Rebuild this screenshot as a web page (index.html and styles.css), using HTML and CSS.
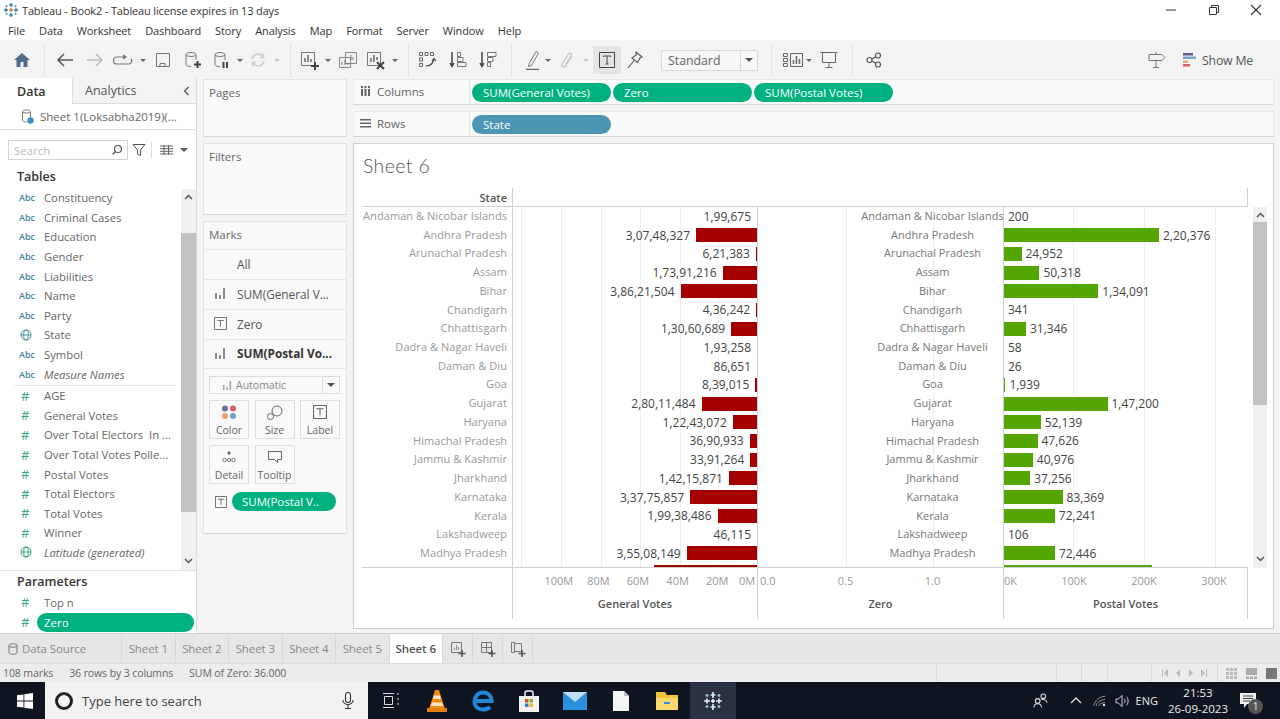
FILE: index.html
```html
<!DOCTYPE html>
<html lang="en">
  <head>
    <meta charset="UTF-8" />
    <title>Tableau - Book2</title>
    <link rel="stylesheet" href="styles.css">
  </head>
  <body>
    <header class="titlebar">
      <svg class="logo" width="16" height="16" viewBox="0 0 16 16"><g stroke="#2f7fb0" stroke-width="1.4"><path d="M8 1v4M6.2 3h3.6M8 11v4M6.2 13h3.6M1 8h4M3 6.2v3.6M11 8h4M13 6.2v3.6"/></g><g stroke="#7a9cc0" stroke-width="1.2"><path d="M3.5 3v2.4M2.4 4.200h2.200M12.500 3v2.400M11.400 4.200h2.200M3.500 10.600V13M2.400 11.800h2.200M12.500 10.600V13M11.400 11.800h2.200"/></g><path d="M8 6v4M6 8h4" stroke="#e0803a" stroke-width="1.400"/></svg>
      <span class="app-title">Tableau - Book2 - Tableau license expires in 13 days</span>
      <div class="winctl">
        <svg width="12" height="12" viewBox="0 0 12 12"><path d="M1 6h10" stroke="#555" stroke-width="1.200"/></svg>
        <svg width="12" height="12" viewBox="0 0 12 12" fill="none" stroke="#333"><path d="M1.500 3.500h7v7h-7zM3.500 3.500v-2h7v7h-2"/></svg>
        <svg width="12" height="12" viewBox="0 0 12 12"><path d="M1 1l10 10M11 1L1 11" stroke="#333" stroke-width="1.100"/></svg>
      </div>
    </header>

    <nav class="menubar">
      <span>File</span><span>Data</span><span>Worksheet</span><span>Dashboard</span><span>Story</span><span>Analysis</span><span>Map</span><span>Format</span><span>Server</span><span>Window</span><span>Help</span>
    </nav>

    <div class="toolbar">
      <div class="tgroup g-home">
        <div class="tb w30"><svg width="18" height="16" viewBox="0 0 18 16"><path d="M9 1L1 8h2.500v7h4v-5h3v5h4V8H17z" fill="#4f6d88"/></svg></div>
      </div>
      <div class="tgroup g-nav">
        <div class="tb w30"><svg width="18" height="14" viewBox="0 0 18 14" fill="none" stroke="#555" stroke-width="1.500"><path d="M17 7H2M8 1L2 7l6 6"/></svg></div>
        <div class="tb w30"><svg width="18" height="14" viewBox="0 0 18 14" fill="none" stroke="#bbb" stroke-width="1.500"><path d="M1 7h15M10 1l6 6-6 6"/></svg></div>
        <div class="tb w26"><svg width="20" height="12" viewBox="0 0 20 12" fill="none" stroke="#777" stroke-width="1.200"><path d="M12 3H4a3 3 0 0 0 0 7h12a3 3 0 0 0 2-5"/><path d="M10 1l3 2-3 2" fill="#777"/></svg></div>
        <div class="tb w14"><i class="caret"></i></div>
        <div class="tb w26"><svg width="16" height="16" viewBox="0 0 16 16" fill="none" stroke="#777"><path d="M1.500 1.500h13v13h-13zM5 14.500v-3h5v3"/></svg></div>
        <div class="tb w34"><svg width="18" height="18" viewBox="0 0 18 18" fill="none" stroke="#777"><ellipse cx="7" cy="3.500" rx="5" ry="2"/><path d="M2 3.500v10c0 1 2 2 5 2M12 3.500V9"/><path d="M13.500 10v7M10 13.500h7" stroke="#444" stroke-width="2"/></svg></div>
        <div class="tb w24"><svg width="18" height="18" viewBox="0 0 18 18" fill="none" stroke="#777"><ellipse cx="7" cy="3.500" rx="5" ry="2"/><path d="M2 3.500v10c0 1 2 2 5 2M12 3.500V9"/><path d="M10.500 11v6M14 11v6" stroke="#444" stroke-width="2"/></svg></div>
        <div class="tb w12"><i class="caret"></i></div>
        <div class="tb w24"><svg width="16" height="16" viewBox="0 0 16 16" fill="none" stroke="#ccc" stroke-width="1.500"><path d="M2 7a6 6 0 0 1 11-2M14 9a6 6 0 0 1-11 2"/><path d="M13.500 1.500V5.500H10M2.500 14.500V10.500H6"/></svg></div>
        <div class="tb w14"><i class="caret off"></i></div>
      </div>
      <div class="tgroup g-sheet">
        <div class="tb w28"><svg width="20" height="20" viewBox="0 0 20 20" fill="none" stroke="#777"><path d="M1.500 2.500h13v13h-13z"/><path d="M5 12V8M8 12V5M11 12V9" stroke="#555" stroke-width="1.300"/><path d="M15 12v8M11 16h8" stroke="#444" stroke-width="2"/></svg></div>
        <div class="tb w8"><i class="caret"></i></div>
        <div class="tb w32"><svg width="20" height="18" viewBox="0 0 20 18" fill="none" stroke="#888"><path d="M7.500 1.500h11v11h-11zM1.500 6.500h11v10h-11z" fill="#f3f3f3"/><path d="M4 14v-3M7 14v-5M10 14v-2M13 9V4M15 9V6" stroke="#777"/></svg></div>
        <div class="tb w24"><svg width="20" height="20" viewBox="0 0 20 20" fill="none" stroke="#777"><path d="M1.500 2.500h13v13h-13z"/><path d="M5 12V8M8 12V5M11 10V7" stroke="#555" stroke-width="1.300"/><path d="M11 12l7 7M18 12l-7 7" stroke="#444" stroke-width="2"/></svg></div>
        <div class="tb w14"><i class="caret"></i></div>
      </div>
      <div class="tgroup g-sort">
        <div class="tb w28"><svg width="20" height="18" viewBox="0 0 20 18" fill="none" stroke="#666"><path d="M1.500 1.500h3v3h-3zM7 1.500h3v3H7zM12.500 1.500h3v3h-3zM1.500 7h3v3h-3zM1.500 12.500h3v3h-3z"/><path d="M8 15c4 0 7-3 8-7M14 10l2-2.500 2 2.500" stroke="#444" stroke-width="1.200"/></svg></div>
        <div class="tb w32"><svg width="18" height="18" viewBox="0 0 18 18" fill="none" stroke="#777"><path d="M3 1v14M1 12l2 3.500L5 12" stroke="#444" stroke-width="1.500"/><path d="M8.500 1.500h3v4h-3zM8.500 6.500h5.500v4H8.500zM8.500 11.500h8.500v4H8.500z"/></svg></div>
        <div class="tb w28"><svg width="18" height="18" viewBox="0 0 18 18" fill="none" stroke="#777"><path d="M3 1v14M1 12l2 3.500L5 12" stroke="#444" stroke-width="1.500"/><path d="M8.500 1.500h8.500v4H8.500zM8.500 6.500h5.500v4H8.500zM8.500 11.500h3v4h-3z"/></svg></div>
      </div>
      <div class="tgroup g-format">
        <div class="tb w20"><svg width="14" height="20" viewBox="0 0 14 20" fill="none" stroke="#777"><path d="M3 14L10 1.500l2.500 1.500L5.500 15.500l-3 1z"/><path d="M0 19.500h13" stroke="#666" stroke-width="1.500"/></svg></div>
        <div class="tb w10"><i class="caret"></i></div>
        <div class="tb w28"><svg width="14" height="18" viewBox="0 0 14 18" fill="none" stroke="#c4c4c4" stroke-width="1.300"><path d="M12 5L5.500 15c-1.500 2-4.500 .5-3.500-1.500L8.500 3c1-1.500 3.500-.5 3 1.500L6 13"/></svg></div>
        <div class="tb w10"><i class="caret off"></i></div>
        <div class="tb t-active"><svg width="16" height="16" viewBox="0 0 16 16" fill="none" stroke="#444"><path d="M.5.500h15v15H.5z"/><path d="M4.500 5V4h7v1M8 4v8M6.500 12h3"/></svg></div>
        <div class="tb w28"><svg width="16" height="18" viewBox="0 0 16 18" fill="none" stroke="#555" stroke-width="1.100"><path d="M9 1l6 5-2 1-2.500 4.500L5 7l4-3zM7.500 9L1 17"/></svg></div>
        <div class="fit-select"><span>Standard</span><b><i class="caret dark"></i></b></div>
      </div>
      <div class="tgroup g-show">
        <div class="tb w24"><svg width="20" height="16" viewBox="0 0 20 16" fill="none" stroke="#666"><path d="M.5 1.500h4v3h-4zM.5 6.500h4v3h-4zM.5 11.500h4v3h-4zM7.500 1.500h12v13h-12z"/><path d="M10.500 12V8M13.500 12V4M16.500 12V7" stroke-width="1.500"/></svg></div>
        <div class="tb w8"><i class="caret"></i></div>
        <div class="tb w28 m2"><svg width="18" height="18" viewBox="0 0 18 18" fill="none" stroke="#666"><path d="M.5 1.500h17M2.500 1.500v10h13v-10M9 11.500v5M5.500 16.500h7"/></svg></div>
      </div>
      <div class="tgroup g-share">
        <div class="tb w28"><svg width="16" height="16" viewBox="0 0 16 16" fill="none" stroke="#555" stroke-width="1.200"><circle cx="3.500" cy="8" r="2.500"/><circle cx="12" cy="3.500" r="2.500"/><circle cx="12" cy="12.500" r="2.500"/><path d="M5.800 7l4-2.300M5.800 9l4 2.300"/></svg></div>
      </div>
      <div class="toolbar-right">
        <svg width="18" height="18" viewBox="0 0 18 18" fill="none" stroke="#777"><path d="M1 3.500h13l3 3-3 3H1zM8 1v2.500M8 9.500v7M5 16.500h6"/></svg>
        <div class="show-me">
          <svg width="14" height="14" viewBox="0 0 14 14"><path d="M0 0h10v2.500H0z" fill="#6b5b8e"/><path d="M0 3.500h13V6H0z" fill="#7f9fc8"/><path d="M0 7.500h5V10H0z" fill="#e8a87c"/><path d="M0 11h7v2.500H0z" fill="#e0616a"/></svg>
          <span>Show Me</span>
        </div>
      </div>
    </div>

    <div class="workspace">
      <aside class="data-pane">
        <div class="pane-tabs">
          <div class="pane-tab on">Data</div>
          <div class="pane-tab">Analytics<svg width="7" height="10" viewBox="0 0 7 10" fill="none" stroke="#555" stroke-width="1.200"><path d="M5.500 1L1.500 5l4 4"/></svg></div>
        </div>
        <div class="source">
          <svg width="13" height="15" viewBox="0 0 13 15" fill="none" stroke="#777"><ellipse cx="5.500" cy="2.500" rx="4" ry="1.600"/><path d="M1.500 2.500v9c0 1 1.800 1.500 4 1.500M9.500 2.500V8"/><circle cx="9.500" cy="11.500" r="3.200" fill="#3f8fc4" stroke="none"/></svg>
          <span>Sheet 1(Loksabha2019)(...</span>
        </div>
        <div class="search-row">
          <div class="search-box">
            <span>Search</span>
            <svg width="12" height="12" viewBox="0 0 12 12" fill="none" stroke="#555" stroke-width="1.200"><circle cx="7" cy="5" r="3.500"/><path d="M4.500 7.500L1.500 10.500"/></svg>
          </div>
          <svg class="funnel" width="14" height="14" viewBox="0 0 14 14" fill="none" stroke="#555"><path d="M1 1.500h12L8.500 7v5.500l-3-1.500V7z"/></svg>
          <i class="vline"></i>
          <svg width="13" height="10" viewBox="0 0 13 10" fill="none" stroke="#666"><path d="M0 1h13M0 3.700h13M0 6.300h13M0 9h13M4 0v10M8.500 0v10"/></svg>
          <i class="caret dark"></i>
        </div>
        <h2 class="pane-head">Tables</h2>
        <div class="field-scroll">
          <ul class="fields">
            <li><b class="abc">Abc</b>Constituency</li>
            <li><b class="abc">Abc</b>Criminal Cases</li>
            <li><b class="abc">Abc</b>Education</li>
            <li><b class="abc">Abc</b>Gender</li>
            <li><b class="abc">Abc</b>Liabilities</li>
            <li><b class="abc">Abc</b>Name</li>
            <li><b class="abc">Abc</b>Party</li>
            <li><b class="type"><svg width="12" height="12" viewBox="0 0 12 12" fill="none" stroke="#4e8fa8"><circle cx="6" cy="6" r="5"/><ellipse cx="6" cy="6" rx="2.300" ry="5"/><path d="M1 6h10"/></svg></b>State</li>
            <li><b class="abc">Abc</b>Symbol</li>
            <li class="gen"><b class="abc">Abc</b>Measure Names</li>
            <li class="divider"></li>
            <li><b class="num">#</b>AGE</li>
            <li><b class="num">#</b>General Votes</li>
            <li><b class="num">#</b>Over Total Electors&nbsp; In ...</li>
            <li><b class="num">#</b>Over Total Votes Polle...</li>
            <li><b class="num">#</b>Postal Votes</li>
            <li><b class="num">#</b>Total Electors</li>
            <li><b class="num">#</b>Total Votes</li>
            <li><b class="num">#</b>Winner</li>
            <li class="gen"><b class="type"><svg width="12" height="12" viewBox="0 0 12 12" fill="none" stroke="#3fa583"><circle cx="6" cy="6" r="5"/><ellipse cx="6" cy="6" rx="2.300" ry="5"/><path d="M1 6h10"/></svg></b>Latitude (generated)</li>
          </ul>
          <div class="scrollbar field-sb">
            <svg class="chev" width="9" height="6" viewBox="0 0 9 6" fill="none" stroke="#555" stroke-width="1.500"><path d="M1 5l3.500-3.500L8 5"/></svg>
            <div class="thumb"></div>
            <svg class="chev end" width="9" height="6" viewBox="0 0 9 6" fill="none" stroke="#555" stroke-width="1.500"><path d="M1 1l3.500 3.500L8 1"/></svg>
          </div>
        </div>
        <div class="params">
          <h2 class="pane-head">Parameters</h2>
          <ul class="fields">
            <li><b class="num">#</b>Top n</li>
            <li class="param-on"><b class="num">#</b><span class="pill">Zero</span></li>
          </ul>
        </div>
      </aside>

      <section class="cards">
        <div class="card card-pages"><h3>Pages</h3></div>
        <div class="card card-filters"><h3>Filters</h3></div>
        <div class="card card-marks">
          <h3>Marks</h3>
          <div class="mark-row all"><span>All</span></div>
          <div class="mark-row"><svg class="barsico" width="12" height="11" viewBox="0 0 12 11"><path d="M1 5h2v6H1zM5 7h2v4H5zM9 0h2v11H9z" fill="#8a8a8a"/></svg><span>SUM(General V...</span></div>
          <div class="mark-row"><svg class="tico" width="13" height="13" viewBox="0 0 13 13" fill="none" stroke="#777"><path d="M.5.500h12v12H.5zM3.500 4V3.500h6V4M6.500 3.500v6"/></svg><span>Zero</span></div>
          <div class="mark-row strong"><svg class="barsico" width="12" height="11" viewBox="0 0 12 11"><path d="M1 5h2v6H1zM5 7h2v4H5zM9 0h2v11H9z" fill="#8a8a8a"/></svg><span>SUM(Postal Vo...</span></div>
          <div class="mark-type">
            <svg width="10" height="9" viewBox="0 0 12 11"><path d="M1 5h2v6H1zM5 7h2v4H5zM9 0h2v11H9z" fill="#aaa"/></svg>
            <span>Automatic</span>
            <b><i class="caret dark"></i></b>
          </div>
          <div class="mark-btns">
            <div class="mbtn"><svg width="16" height="15" viewBox="0 0 16 15"><circle cx="4" cy="3.500" r="3" fill="#7a6aa0"/><circle cx="12" cy="3.500" r="3" fill="#d9606a"/><circle cx="4" cy="11" r="3" fill="#e8a070"/><circle cx="12" cy="11" r="3" fill="#6f9fd0"/></svg><span>Color</span></div>
            <div class="mbtn"><svg width="16" height="15" viewBox="0 0 16 15" fill="none" stroke="#666"><circle cx="10" cy="6" r="5"/><circle cx="3.500" cy="11.500" r="3" fill="#f9f9f9"/></svg><span>Size</span></div>
            <div class="mbtn"><svg width="14" height="14" viewBox="0 0 13 13" fill="none" stroke="#666"><path d="M.5.500h12v12H.5zM3.500 4V3.500h6V4M6.500 3.500v6"/></svg><span>Label</span></div>
            <div class="mbtn"><svg width="14" height="14" viewBox="0 0 14 14" fill="none" stroke="#777"><circle cx="7" cy="3" r="1.500" fill="#555" stroke="none"/><circle cx="2.500" cy="10" r="1.700"/><circle cx="7" cy="10" r="1.700"/><circle cx="11.500" cy="10" r="1.700"/></svg><span>Detail</span></div>
            <div class="mbtn"><svg width="14" height="14" viewBox="0 0 14 14" fill="none" stroke="#666"><path d="M.5 1.500h13v8H9.500v3l-3-3h-6z"/></svg><span>Tooltip</span></div>
          </div>
          <div class="mark-pill">
            <svg width="12" height="12" viewBox="0 0 13 13" fill="none" stroke="#666"><path d="M.5.500h12v12H.5zM3.500 4V3.500h6V4M6.500 3.500v6"/></svg>
            <span class="pill">SUM(Postal V..</span>
          </div>
        </div>
      </section>

      <section class="work">
        <div class="shelf">
          <div class="shelf-label"><svg width="11" height="10" viewBox="-1 0 11 10"><path d="M0 3h2v7H0zM3.500 3h2v7h-2zM7 3h2v7H7zM0 0h2v2H0zM3.500 0h2v2h-2zM7 0h2v2H7z" fill="#666"/></svg><span>Columns</span></div>
          <span class="pill shelf-pill">SUM(General Votes)</span>
          <span class="pill shelf-pill">Zero</span>
          <span class="pill shelf-pill">SUM(Postal Votes)</span>
        </div>
        <div class="shelf">
          <div class="shelf-label"><svg width="11" height="9" viewBox="0 0 11 9"><path d="M0 0h11v1.500H0zM0 3.500h11V5H0zM0 7h11v1.500H0z" fill="#666"/></svg><span>Rows</span></div>
          <span class="pill shelf-pill dim">State</span>
        </div>

        <div class="sheet">
          <h1 class="sheet-title">Sheet 6</h1>
          <div class="viz">
            <div class="viz-head">
              <div class="head-state">State</div>
              <div class="head-rest"></div>
            </div>
            <div class="viz-mid">
              <div class="rows">
                <div class="row"><div class="c-state">Andaman &amp; Nicobar Islands</div><div class="c-gen"><span>1,99,675</span><i style="width:0"></i></div><div class="c-zero"><span>Andaman &amp; Nicobar Islands</span></div><div class="c-post"><i style="width:0"></i><span>200</span></div></div>
                <div class="row"><div class="c-state">Andhra Pradesh</div><div class="c-gen"><span>3,07,48,327</span><i style="width:61px"></i></div><div class="c-zero"><span>Andhra Pradesh</span></div><div class="c-post"><i style="width:155px"></i><span>2,20,376</span></div></div>
                <div class="row"><div class="c-state">Arunachal Pradesh</div><div class="c-gen"><span>6,21,383</span><i style="width:1.2px"></i></div><div class="c-zero"><span>Arunachal Pradesh</span></div><div class="c-post"><i style="width:17.5px"></i><span>24,952</span></div></div>
                <div class="row"><div class="c-state">Assam</div><div class="c-gen"><span>1,73,91,216</span><i style="width:34.4px"></i></div><div class="c-zero"><span>Assam</span></div><div class="c-post"><i style="width:35.4px"></i><span>50,318</span></div></div>
                <div class="row"><div class="c-state">Bihar</div><div class="c-gen"><span>3,86,21,504</span><i style="width:76.5px"></i></div><div class="c-zero"><span>Bihar</span></div><div class="c-post"><i style="width:94.3px"></i><span>1,34,091</span></div></div>
                <div class="row"><div class="c-state">Chandigarh</div><div class="c-gen"><span>4,36,242</span><i style="width:0.9px"></i></div><div class="c-zero"><span>Chandigarh</span></div><div class="c-post"><i style="width:0"></i><span>341</span></div></div>
                <div class="row"><div class="c-state">Chhattisgarh</div><div class="c-gen"><span>1,30,60,689</span><i style="width:25.9px"></i></div><div class="c-zero"><span>Chhattisgarh</span></div><div class="c-post"><i style="width:22px"></i><span>31,346</span></div></div>
                <div class="row"><div class="c-state">Dadra &amp; Nagar Haveli</div><div class="c-gen"><span>1,93,258</span><i style="width:0"></i></div><div class="c-zero"><span>Dadra &amp; Nagar Haveli</span></div><div class="c-post"><i style="width:0"></i><span>58</span></div></div>
                <div class="row"><div class="c-state">Daman &amp; Diu</div><div class="c-gen"><span>86,651</span><i style="width:0"></i></div><div class="c-zero"><span>Daman &amp; Diu</span></div><div class="c-post"><i style="width:0"></i><span>26</span></div></div>
                <div class="row"><div class="c-state">Goa</div><div class="c-gen"><span>8,39,015</span><i style="width:1.7px"></i></div><div class="c-zero"><span>Goa</span></div><div class="c-post"><i style="width:1.4px"></i><span>1,939</span></div></div>
                <div class="row"><div class="c-state">Gujarat</div><div class="c-gen"><span>2,80,11,484</span><i style="width:55.5px"></i></div><div class="c-zero"><span>Gujarat</span></div><div class="c-post"><i style="width:103.5px"></i><span>1,47,200</span></div></div>
                <div class="row"><div class="c-state">Haryana</div><div class="c-gen"><span>1,22,43,072</span><i style="width:24.2px"></i></div><div class="c-zero"><span>Haryana</span></div><div class="c-post"><i style="width:36.7px"></i><span>52,139</span></div></div>
                <div class="row"><div class="c-state">Himachal Pradesh</div><div class="c-gen"><span>36,90,933</span><i style="width:7.3px"></i></div><div class="c-zero"><span>Himachal Pradesh</span></div><div class="c-post"><i style="width:33.5px"></i><span>47,626</span></div></div>
                <div class="row"><div class="c-state">Jammu &amp; Kashmir</div><div class="c-gen"><span>33,91,264</span><i style="width:6.7px"></i></div><div class="c-zero"><span>Jammu &amp; Kashmir</span></div><div class="c-post"><i style="width:28.8px"></i><span>40,976</span></div></div>
                <div class="row"><div class="c-state">Jharkhand</div><div class="c-gen"><span>1,42,15,871</span><i style="width:28.1px"></i></div><div class="c-zero"><span>Jharkhand</span></div><div class="c-post"><i style="width:26.2px"></i><span>37,256</span></div></div>
                <div class="row"><div class="c-state">Karnataka</div><div class="c-gen"><span>3,37,75,857</span><i style="width:66.9px"></i></div><div class="c-zero"><span>Karnataka</span></div><div class="c-post"><i style="width:58.6px"></i><span>83,369</span></div></div>
                <div class="row"><div class="c-state">Kerala</div><div class="c-gen"><span>1,99,38,486</span><i style="width:39.5px"></i></div><div class="c-zero"><span>Kerala</span></div><div class="c-post"><i style="width:50.8px"></i><span>72,241</span></div></div>
                <div class="row"><div class="c-state">Lakshadweep</div><div class="c-gen"><span>46,115</span><i style="width:0"></i></div><div class="c-zero"><span>Lakshadweep</span></div><div class="c-post"><i style="width:0"></i><span>106</span></div></div>
                <div class="row"><div class="c-state">Madhya Pradesh</div><div class="c-gen"><span>3,55,08,149</span><i style="width:70.3px"></i></div><div class="c-zero"><span>Madhya Pradesh</span></div><div class="c-post"><i style="width:50.9px"></i><span>72,446</span></div></div>
                <div class="row"><div class="c-state">Maharashtra</div><div class="c-gen"><span></span><i style="width:103px"></i></div><div class="c-zero"><span>Maharashtra</span></div><div class="c-post"><i style="width:148px"></i><span></span></div></div>
              </div>
              <div class="scrollbar viz-sb">
                <svg class="chev" width="9" height="6" viewBox="0 0 9 6" fill="none" stroke="#555" stroke-width="1.500"><path d="M1 5l3.500-3.500L8 5"/></svg>
                <div class="thumb"></div>
                <svg class="chev end" width="9" height="6" viewBox="0 0 9 6" fill="none" stroke="#555" stroke-width="1.500"><path d="M1 1l3.500 3.500L8 1"/></svg>
              </div>
            </div>
            <div class="viz-axis">
              <div class="ax-blank"></div>
              <div class="ax ax-gen">
                <div class="ticks"><span>100M</span><span>80M</span><span>60M</span><span>40M</span><span>20M</span><span class="last">0M</span></div>
                <div class="ax-title">General Votes</div>
              </div>
              <div class="ax ax-zero">
                <div class="ticks"><span class="first">0.0</span><span>0.5</span><span>1.0</span></div>
                <div class="ax-title">Zero</div>
              </div>
              <div class="ax ax-post">
                <div class="ticks"><span class="first">0K</span><span>100K</span><span>200K</span><span>300K</span></div>
                <div class="ax-title">Postal Votes</div>
              </div>
            </div>
          </div>
        </div>
      </section>
    </div>

    <div class="tabbar">
      <div class="tab tab-source"><svg width="10" height="12" viewBox="0 0 10 12" fill="none" stroke="#777"><ellipse cx="5" cy="2.500" rx="4" ry="1.800"/><path d="M1 2.500v7c0 1 1.800 1.800 4 1.800s4-.8 4-1.800v-7"/></svg>Data Source</div>
      <div class="tab">Sheet 1</div>
      <div class="tab">Sheet 2</div>
      <div class="tab">Sheet 3</div>
      <div class="tab">Sheet 4</div>
      <div class="tab">Sheet 5</div>
      <div class="tab on">Sheet 6</div>
      <div class="tab tab-new"><svg width="16" height="16" viewBox="0 0 16 16" fill="none" stroke="#777"><path d="M1.500 1.500h10v10h-10z"/><path d="M4.500 9V7M6.500 9V4M8.500 9V6" stroke-width=".8"/><path d="M12 9v7M8.500 12.500h7" stroke="#555" stroke-width="1.600"/></svg></div>
      <div class="tab tab-new"><svg width="16" height="16" viewBox="0 0 16 16" fill="none" stroke="#777"><path d="M1.500 1.500h10v10h-10zM1.500 6.500h10M6.500 1.500v10"/><path d="M12 9v7M8.500 12.500h7" stroke="#555" stroke-width="1.600"/></svg></div>
      <div class="tab tab-new"><svg width="16" height="16" viewBox="0 0 16 16" fill="none" stroke="#777"><path d="M1.500 1.500h3v10h-3zM4.500 2.500h7v8h-7z"/><path d="M12 9v7M8.500 12.500h7" stroke="#555" stroke-width="1.600"/></svg></div>
    </div>

    <div class="statusbar">
      <span>108 marks</span><span>36 rows by 3 columns</span><span>SUM of Zero: 36.000</span>
      <div class="status-cells">
        <i class="c120"></i><i class="c25"></i><i class="c26"></i><i class="c44"></i>
        <div class="pager">
          <svg width="6" height="8" viewBox="0 0 6 8"><path d="M0 0h1v8H0zM6 0v8L2 4z" fill="#bbb"/></svg>
          <svg width="4" height="8" viewBox="0 0 4 8"><path d="M4 0v8L0 4z" fill="#bbb"/></svg>
          <svg width="4" height="8" viewBox="0 0 4 8"><path d="M0 0v8l4-4z" fill="#bbb"/></svg>
          <svg width="6" height="8" viewBox="0 0 6 8"><path d="M5 0h1v8H5zM0 0v8l4-4z" fill="#bbb"/></svg>
        </div>
        <div class="views">
          <svg width="11" height="11" viewBox="0 0 11 11"><path d="M0 0h3v3H0zM4 0h3v3H4zM8 0h3v3H8zM0 4h3v3H0zM4 4h3v3H4zM8 4h3v3H8zM0 8h3v3H0zM4 8h3v3H4zM8 8h3v3H8z" fill="#bbb"/></svg>
          <svg width="11" height="11" viewBox="0 0 11 11"><path d="M0 0h11v7H0zM0 8.500h3V11H0zM4 8.500h3V11H4zM8 8.500h3V11H8z" fill="#aaa"/></svg>
          <svg width="11" height="11" viewBox="0 0 11 11"><path d="M0 0h11v11H0z" fill="#777"/></svg>
        </div>
      </div>
    </div>

    <footer class="taskbar">
      <div class="start"><svg width="16" height="16" viewBox="0 0 16 16"><path d="M0 2.300l6.500-.9v6.200H0zM7.300 1.300L16 0v7.600H7.300zM0 8.400h6.500v6.200L0 13.700zM7.300 8.400H16V16l-8.700-1.300z" fill="#fff"/></svg></div>
      <div class="task-search">
        <i class="cortana"></i>
        <span>Type here to search</span>
        <svg width="12" height="17" viewBox="0 0 12 17" fill="none" stroke="#333" stroke-width="1.100"><rect x="3.500" y=".5" width="5" height="10" rx="2.500"/><path d="M1 8c0 6 10 6 10 0M6 13v3M3 16.500h6"/></svg>
      </div>
      <div class="task-icons">
        <div class="ti"><svg width="17" height="15" viewBox="0 0 17 15" fill="none" stroke="#ddd"><path d="M0 .5h11M0 14.500h11M1.500 3.500h8v8h-8zM14 1h2M14 6h2M14 11h2"/></svg></div>
        <div class="ti"><svg width="20" height="23" viewBox="0 0 20 23"><path d="M8 1h4l6 19H2z" fill="#f08a12"/><path d="M7 6.500h6l1 3.500H6zM5 13.500h10l1 3.500H4z" fill="#f8e6cc"/><path d="M0 19h20v4H0z" fill="#e77e0b"/></svg></div>
        <div class="ti"><svg width="22" height="22" viewBox="0 0 22 22" fill="none" stroke="#1e88d8" stroke-width="4"><path d="M3 11h16.500C19.500 6 16 2.500 11 2.500S2.500 6.500 2.500 11.500 6 19.500 11 19.500c3 0 5.500-1 7-2.500"/></svg></div>
        <div class="ti"><svg width="22" height="22" viewBox="0 0 22 22"><path d="M1 6h20v16H1z" fill="#f2f2f2"/><path d="M7 6V3a2 2 0 0 1 2-2h4a2 2 0 0 1 2 2v3" fill="none" stroke="#f2f2f2" stroke-width="1.500"/><path d="M7 9h3.500v3.500H7z" fill="#e0502a"/><path d="M11.500 9H15v3.500h-3.500z" fill="#7db81f"/><path d="M7 13.500h3.500V17H7z" fill="#1e88d8"/><path d="M11.500 13.500H15V17h-3.500z" fill="#f3b90f"/></svg></div>
        <div class="ti"><svg width="24" height="18" viewBox="0 0 24 18"><path d="M0 0h24v18H0z" fill="#2a8fdc"/><path d="M0 0l12 10L24 0" fill="#bde0f8"/></svg></div>
        <div class="ti"><svg width="16" height="20" viewBox="0 0 16 20"><path d="M0 0h11l5 5v15H0z" fill="#f5f5f5"/><path d="M11 0l5 5h-5z" fill="#bbb"/></svg></div>
        <div class="ti"><svg width="22" height="18" viewBox="0 0 22 18"><path d="M0 0h9l2 3h11v15H0z" fill="#f3c23f"/><path d="M0 6h22v12H0z" fill="#fbd96a"/><path d="M8 10h6v2H8z" fill="#2a8fdc"/></svg></div>
        <div class="ti ti-on"><svg width="20" height="20" viewBox="0 0 20 20"><g stroke="#dfeaf5" stroke-width="1.700"><path d="M10 1v6M7.500 4h5M10 13v6M7.500 16h5M1 10h6M4 7.500v5M13 10h6M16 7.500v5"/></g><g stroke="#9ec3e0" stroke-width="1.300"><path d="M4 3v3M2.500 4.500h3M16 3v3M14.500 4.500h3M4 14v3M2.500 15.500h3M16 14v3M14.500 15.500h3"/></g><path d="M10 8v4M8 10h4" stroke="#fff" stroke-width="1.500"/></svg></div>
      </div>
      <div class="tray">
        <svg class="t-people" width="15" height="17" viewBox="0 0 16 17" fill="none" stroke="#ddd" stroke-width="1.100"><circle cx="5" cy="9" r="2.500"/><path d="M1 16c0-3 2-4 4-4s4 1 4 4"/><circle cx="11" cy="4" r="2.500"/><path d="M9 7.500c3-.5 6 1 6 3.500"/></svg>
        <svg class="t-up" width="12" height="7" viewBox="0 0 12 7" fill="none" stroke="#ddd" stroke-width="1.300"><path d="M1 6l5-5 5 5"/></svg>
        <svg class="t-wifi" width="13" height="12" viewBox="0 0 16 14" fill="none" stroke="#aaa"><path d="M1 13C2 7 7 2 15 1M4 13c1-4 4-7 11-8M7 13c1-2 3-4 8-4"/><circle cx="13.500" cy="12" r="1.500" fill="#eee" stroke="none"/></svg>
        <svg class="t-vol" width="15" height="14" viewBox="0 0 16 14" fill="none" stroke="#ddd"><path d="M1 5h2.500L7.500 1v12l-4-4H1zM10 4.500c1 1.500 1 3.500 0 5M12.500 2.500c2 2.500 2 6.500 0 9"/></svg>
        <span class="t-lang">ENG</span>
        <div class="t-clock"><span>21:53</span><span>26-09-2023</span></div>
        <div class="t-note">
          <svg width="16" height="15" viewBox="0 0 16 15"><path d="M0 0h16v11H7l-3 4v-4H0z" fill="#f2f2f2"/><path d="M3 3h10M3 5.500h10M3 8h7" stroke="#222" stroke-width=".9"/></svg>
          <b>1</b>
        </div>
      </div>
    </footer>
  </body>
</html>
```

FILE: styles.css
```css
* {
  box-sizing: border-box;
}

body {
  margin: 0;
  width: 1280px;
  height: 719px;
  overflow: hidden;
  background: #fff;
  color: #444;
  font-family: "Open Sans", "Liberation Sans", sans-serif;
  font-size: 12px;
}

ul {
  list-style: none;
  margin: 0;
  padding: 0;
}

h1, h2, h3 {
  margin: 0;
  font-weight: normal;
}

svg {
  display: block;
  flex: none;
}

/* title + menu */
.titlebar {
  height: 20px;
  display: flex;
  align-items: center;
  padding-left: 3px;
  color: #333;
}

.app-title {
  margin-left: 3px;
  font-size: 11px;
  letter-spacing: -0.15px;
}

.winctl {
  margin-left: auto;
  display: flex;
  align-items: center;
  gap: 30.5px;
  padding-right: 18px;
}

.menubar {
  height: 20px;
  display: flex;
  align-items: center;
  gap: 14px;
  padding-left: 8px;
  color: #333;
  font-size: 11px;
  letter-spacing: -0.1px;
}

/* toolbar */
.toolbar {
  height: 38px;
  display: flex;
  background: #f3f3f3;
  padding-top: 3px;
}

.tgroup {
  display: flex;
  align-items: center;
  height: 34px;
  border-right: 1px solid #e0e0e0;
}

.g-home { width: 45px; justify-content: center; }
.g-nav { width: 246px; padding-left: 5px; }
.g-sheet { width: 118px; padding-left: 5px; }
.g-sort { width: 103px; padding-left: 5px; }
.g-format { width: 260px; padding-left: 11px; }
.g-show { width: 81px; padding-left: 9px; }
.g-share { border-right: 0; padding-left: 7px; }

.tb {
  display: flex;
  align-items: center;
  justify-content: center;
  height: 100%;
}

.w8 { width: 8px; }
.w10 { width: 10px; }
.w12 { width: 12px; }
.w14 { width: 14px; }
.w20 { width: 20px; }
.w24 { width: 24px; }
.w26 { width: 26px; }
.w28 { width: 28px; }
.w30 { width: 30px; }
.w32 { width: 32px; }
.w34 { width: 34px; }
.m2 { margin-left: 2px; }

.t-active {
  width: 28px;
  height: 28px;
  margin-left: 2px;
  background: #e4e4e4;
}

.caret {
  display: block;
  border: 3px solid transparent;
  border-top: 3px solid #666;
  border-bottom: 0;
  width: 0;
}

.caret.off { border-top-color: #c4c4c4; }
.caret.dark { border-top-color: #555; border-left-width: 4px; border-right-width: 4px; border-top-width: 4px; }

.fit-select {
  width: 97px;
  height: 21px;
  margin-left: 12px;
  display: flex;
  align-items: center;
  border: 1px solid #d8d8d8;
  background: #f7f7f7;
  font-size: 12.3px;
  color: #666;
}

.fit-select span {
  flex: 1;
  padding-left: 6px;
}

.fit-select b {
  width: 17px;
  height: 100%;
  display: flex;
  align-items: center;
  justify-content: center;
  border-left: 1px solid #d8d8d8;
}

.toolbar-right {
  margin-left: auto;
  display: flex;
  align-items: center;
  height: 34px;
  padding-right: 27px;
  gap: 17px;
}

.show-me {
  display: flex;
  align-items: center;
  gap: 5px;
  font-size: 12.3px;
  color: #555;
  letter-spacing: -0.2px;
}

/* main area */
.workspace {
  height: 555px;
  display: flex;
  background: #f3f3f3;
}

.data-pane {
  width: 197px;
  background: #fff;
  border-right: 1px solid #dcdcdc;
  display: flex;
  flex-direction: column;
}

.pane-tabs {
  height: 26px;
  display: flex;
  flex: none;
  font-size: 12.5px;
}

.pane-tab {
  flex: 1;
  display: flex;
  align-items: center;
  justify-content: space-between;
  padding: 0 6px 0 12px;
  background: #f3f3f3;
  border-bottom: 1px solid #dcdcdc;
  border-left: 1px solid #dcdcdc;
  color: #555;
}

.pane-tab.on {
  flex: 0 0 72px;
  padding-left: 17px;
  background: #fff;
  border: 0;
  font-weight: 600;
  color: #333;
}

.source {
  height: 26px;
  flex: none;
  display: flex;
  align-items: center;
  gap: 6px;
  padding-left: 21px;
  border-bottom: 1px solid #dcdcdc;
  font-size: 11.5px;
  color: #666;
}

.search-row {
  height: 20px;
  margin-top: 10px;
  flex: none;
  display: flex;
  align-items: center;
  padding-left: 8px;
}

.search-box {
  width: 120px;
  height: 20px;
  display: flex;
  align-items: center;
  justify-content: space-between;
  padding: 0 4px 0 5px;
  border: 1px solid #d4d4d4;
  color: #bbb;
  font-size: 11.5px;
}

.funnel {
  margin-left: 4px;
}

.vline {
  width: 1px;
  height: 16px;
  margin: 0 8px 0 5px;
  background: #ddd;
}

.search-row .caret {
  margin-left: 7px;
}

.pane-head {
  flex: none;
  padding-left: 17px;
  font-size: 12.5px;
  font-weight: 600;
  color: #333;
}

.data-pane > .pane-head {
  margin-top: 8px;
  height: 17px;
  line-height: 17px;
}

.field-scroll {
  height: 386px;
  flex: none;
  display: flex;
  border-bottom: 1px solid #e4e4e4;
}

.fields {
  flex: 1;
}

.field-scroll .fields {
  padding-top: 3px;
}

.fields li {
  height: 19.6px;
  display: flex;
  align-items: center;
  font-size: 11.3px;
  color: #666;
  white-space: nowrap;
}

.fields li.gen {
  font-style: italic;
}

.fields li.divider {
  height: 1px;
  margin: 1px 5px 0 14px;
  background: #e8e8e8;
}

.fields b {
  width: 44px;
  flex: none;
  font-style: normal;
}

.abc {
  padding-left: 19px;
  font-size: 9px;
  font-weight: 600;
  color: #3f84a0;
}

.type {
  padding-left: 20px;
}

.num {
  padding-left: 21px;
  font-size: 13px;
  font-weight: 400;
  color: #3fa583;
}

.scrollbar {
  flex: none;
  width: 15px;
  display: flex;
  flex-direction: column;
  align-items: center;
  background: #f0f0f0;
}

.chev {
  margin-top: 5px;
}

.chev.end {
  margin-top: auto;
  margin-bottom: 6px;
}

.thumb {
  width: 100%;
  background: #c2c2c2;
}

.field-sb {
  margin-top: 4px;
}

.field-sb .thumb {
  height: 279px;
  margin-top: 33px;
}

.params .pane-head {
  height: 21px;
  line-height: 20px;
  padding-top: 1px;
}

.params li {
  height: 20px;
}

.param-on b {
  width: 37px;
}

.pill {
  display: flex;
  align-items: center;
  border-radius: 10px;
  background: #00b180;
  color: #fff;
  white-space: nowrap;
}

.param-on .pill {
  width: 157px;
  height: 19px;
  padding-left: 7px;
  font-size: 11.5px;
}

/* pages, filters, marks */
.cards {
  width: 156px;
  padding: 1px 0 0 6px;
  display: flex;
  flex-direction: column;
  gap: 6px;
  flex: none;
}

.card {
  width: 144px;
  background: #f9f9f9;
  border: 1px solid #e2e2e2;
  border-bottom-color: #d4d4d4;
}

.card h3 {
  padding: 5px 0 0 5px;
  font-size: 11.5px;
  color: #666;
}

.card-pages { height: 58px; }
.card-filters { height: 72px; }
.card-marks { height: 313px; }

.card-marks h3 {
  height: 27px;
}

.mark-row {
  height: 30px;
  display: flex;
  align-items: center;
  padding-bottom: 2px;
  border-top: 1px solid #e6e6e6;
  font-size: 11.8px;
  color: #555;
  white-space: nowrap;
}

.mark-row span {
  margin-left: 33px;
}

.mark-row svg + span {
  margin-left: 0;
}

.barsico {
  margin: 0 11px 0 10px;
}

.tico {
  margin: 0 10px 0 10px;
}

.mark-row.strong {
  font-weight: 700;
  color: #333;
  border-bottom: 1px solid #e6e6e6;
}

.mark-type {
  width: 131px;
  height: 18px;
  margin: 7px 0 0 5px;
  display: flex;
  align-items: center;
  border: 1px solid #dcdcdc;
  font-size: 10.5px;
  color: #888;
}

.mark-type svg {
  margin: 0 4px 0 12px;
}

.mark-type span {
  flex: 1;
}

.mark-type b {
  width: 17px;
  height: 100%;
  display: flex;
  align-items: center;
  justify-content: center;
  border-left: 1px solid #dcdcdc;
}

.mark-btns {
  display: grid;
  grid-template-columns: repeat(3, 40px);
  grid-auto-rows: 39px;
  column-gap: 5.5px;
  row-gap: 6px;
  margin: 6px 0 0 5px;
}

.mbtn {
  display: flex;
  flex-direction: column;
  align-items: center;
  justify-content: space-between;
  padding: 4px 0 1px;
  border: 1px solid #dedede;
  font-size: 10.5px;
  color: #666;
}

.mark-pill {
  display: flex;
  align-items: center;
  margin-top: 8px;
  padding-left: 11px;
  gap: 5px;
}

.mark-pill .pill {
  width: 104px;
  height: 19px;
  padding-left: 10px;
  font-size: 11.5px;
}

/* shelves + sheet */
.work {
  width: 921px;
  flex: none;
  padding-top: 1px;
  display: flex;
  flex-direction: column;
}

.shelf {
  height: 26px;
  margin-bottom: 6px;
  display: flex;
  align-items: center;
  gap: 2px;
  background: #f9f9f9;
  border: 1px solid #e8e8e8;
  border-bottom-color: #d4d4d4;
}

.shelf-label {
  width: 116px;
  height: 100%;
  display: flex;
  align-items: center;
  gap: 6px;
  padding: 0 0 2px 6px;
  border-right: 1px solid #e4e4e4;
  font-size: 11.5px;
  color: #666;
}

.shelf-pill {
  width: 139px;
  height: 19px;
  padding-left: 11px;
  font-size: 11.5px;
}

.shelf-pill.dim {
  background: #4a96b4;
}

.sheet {
  height: 486px;
  background: #fff;
  border: 1px solid #cfcfcf;
  padding-left: 8px;
}

.sheet-title {
  height: 44px;
  padding: 10px 0 0 1px;
  font-family: Lato, "Open Sans", sans-serif;
  font-size: 19.5px;
  font-weight: 300;
  letter-spacing: .4px;
  color: #555;
}

/* 362-512 labels, then three 245px panes */
.viz {
  display: flex;
  flex-direction: column;
}

.viz-head {
  width: 886px;
  height: 19px;
  display: flex;
  border-bottom: 1px solid #d0d0d0;
}

.head-state {
  width: 151px;
  padding: 2px 5px 0 0;
  border-right: 1px solid #d0d0d0;
  text-align: right;
  font-size: 11px;
  font-weight: 600;
  color: #555;
}

.head-rest {
  flex: 1;
  border-right: 1px solid #d0d0d0;
}

.viz-mid {
  height: 361px;
  display: flex;
}

.rows {
  width: 886px;
  height: 361px;
  overflow: hidden;
  border-bottom: 1px solid #d0d0d0;
  background-image:
    linear-gradient(#eee, #eee), linear-gradient(#eee, #eee), linear-gradient(#eee, #eee),
    linear-gradient(#eee, #eee), linear-gradient(#eee, #eee), linear-gradient(#eee, #eee),
    linear-gradient(#eee, #eee), linear-gradient(#eee, #eee), linear-gradient(#eee, #eee),
    linear-gradient(#eee, #eee), linear-gradient(#eee, #eee);
  background-size: 1px 100%;
  background-repeat: no-repeat;
  background-position: 159px 0, 199px 0, 239px 0, 278px 0, 318px 0, 356px 0, 484px 0, 571px 0, 711px 0, 782px 0, 853px 0;
}

.row {
  height: 18.72px;
  display: grid;
  grid-template-columns: 151px 245px 246px 244px;
  font-size: 12px;
  white-space: nowrap;
}

.c-state {
  padding-right: 5px;
  border-right: 1px solid #d0d0d0;
  text-align: right;
  font-size: 11px;
  line-height: 18px;
  letter-spacing: .06px;
  color: #999;
}

.c-gen, .c-post {
  display: flex;
  align-items: center;
  gap: 6px;
  color: #444;
}

.c-gen {
  justify-content: flex-end;
  border-right: 1px solid #d0d0d0;
}

.c-post {
  gap: 4px;
  border-left: 1px solid #d0d0d0;
  margin-left: -1px;
}

.c-gen i, .c-post i {
  display: block;
  height: 14px;
  flex: none;
}

.c-gen i {
  background: #a50000;
}

.c-post i {
  background: #53a600;
}

.c-zero {
  display: flex;
  justify-content: center;
  padding-left: 103px;
  overflow: hidden;
  font-size: 11px;
  line-height: 18px;
  color: #777;
}

.viz-sb {
  margin-left: 5px;
  width: 14px;
  height: 361px;
}

.viz-sb .thumb {
  height: 183px;
  margin-top: 4px;
}

.viz-axis {
  width: 886px;
  height: 51px;
  display: grid;
  grid-template-columns: 151px 245px 246px 244px;
}

.ax-blank, .ax {
  border-right: 1px solid #d0d0d0;
}

.ticks {
  height: 24px;
  padding-top: 5px;
  display: flex;
  justify-content: flex-end;
  font-size: 11px;
  color: #999;
}

.ticks span {
  flex: none;
  text-align: center;
}

.ax-gen .ticks span { width: 39.6px; }
.ax-gen .ticks span.last { width: 20px; }
.ax-zero .ticks { padding-right: 27px; }
.ax-zero .ticks span { width: 87px; }
.ax-post .ticks { margin-right: -2px; }
.ax-post .ticks span { width: 70px; }

.ticks span.first {
  width: auto;
  margin-right: auto;
  padding-left: 2px;
}

.ax-post .ticks span.first {
  padding-left: 0;
}

.ax-title {
  margin-top: 4px;
  text-align: center;
  font-size: 11px;
  font-weight: 600;
  color: #555;
}

/* tabs + status */
.tabbar {
  height: 30px;
  display: flex;
  background: #e6e6e6;
  border-top: 1px solid #cfcfcf;
  color: #888;
  font-size: 11.5px;
}

.tab {
  width: 53.5px;
  display: flex;
  align-items: center;
  justify-content: center;
  border-right: 1px solid #d8d8d8;
  letter-spacing: -0.1px;
}

.tab-source {
  width: 122px;
  justify-content: flex-start;
  padding-left: 8px;
  gap: 4px;
}

.tab.on {
  background: #fff;
  font-weight: 600;
  color: #555;
}

.tab-new {
  width: 30px;
}

.statusbar {
  height: 19px;
  display: flex;
  align-items: center;
  gap: 16px;
  padding-left: 3px;
  background: #ececec;
  border-top: 1px solid #dcdcdc;
  font-size: 10.5px;
  color: #666;
  letter-spacing: -0.1px;
}

.status-cells {
  margin-left: auto;
  display: flex;
  align-items: center;
  height: 100%;
}

.status-cells i {
  display: block;
  height: 100%;
  border-left: 1px solid #dadada;
}

.c120 { width: 120px; }
.c25 { width: 25px; }
.c26 { width: 26px; }
.c44 { width: 44px; }

.pager {
  width: 66px;
  height: 100%;
  display: flex;
  align-items: center;
  justify-content: space-around;
  padding: 0 6px;
  border-left: 1px solid #dadada;
}

.views {
  width: 63px;
  height: 100%;
  display: flex;
  align-items: center;
  gap: 9px;
  padding-left: 8px;
  border-left: 1px solid #dadada;
}

/* windows taskbar */
.taskbar {
  height: 37px;
  display: flex;
  align-items: center;
  background: #0e1420;
  color: #eee;
}

.start {
  width: 45px;
  height: 100%;
  display: flex;
  align-items: center;
  justify-content: center;
  padding-left: 5px;
}

.task-search {
  width: 323px;
  height: 100%;
  display: flex;
  align-items: center;
  padding-left: 10px;
  background: #f2f2f2;
  color: #444;
  font-size: 13px;
}

.task-search span {
  flex: 1;
  margin-left: 9px;
}

.task-search svg {
  margin-right: 14px;
}

.cortana {
  width: 18px;
  height: 18px;
  border: 3px solid #222;
  border-radius: 50%;
}

.task-icons {
  display: flex;
  height: 100%;
}

.ti {
  width: 46px;
  display: flex;
  align-items: center;
  justify-content: center;
}

.ti-on {
  background: #2a3242;
}

.tray {
  margin-left: auto;
  height: 100%;
  display: flex;
  align-items: center;
  padding-right: 24px;
}

.t-up { margin-left: 22px; }
.t-wifi { margin-left: 11px; }
.t-vol { margin-left: 9px; }

.t-lang {
  margin-left: 6px;
  font-size: 11px;
}

.t-clock {
  margin-left: 10px;
  display: flex;
  flex-direction: column;
  align-items: center;
  font-size: 11.5px;
  line-height: 16px;
}

.t-note {
  position: relative;
  margin-left: 12px;
}

.t-note b {
  position: absolute;
  left: 8px;
  top: 6px;
  width: 15px;
  height: 15px;
  border-radius: 50%;
  background: #555;
  color: #eee;
  text-align: center;
  font-size: 10px;
  line-height: 15px;
  font-weight: 400;
}
```
